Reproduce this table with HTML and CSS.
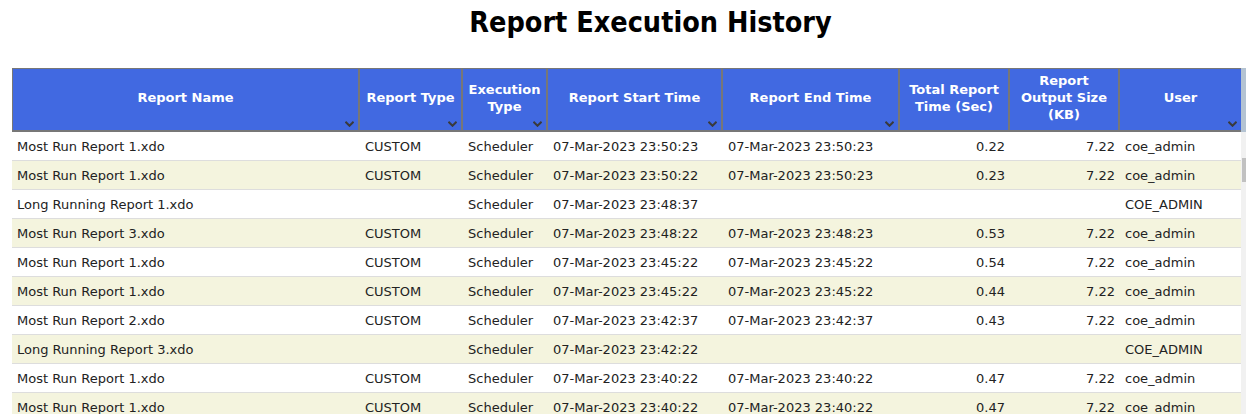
FILE: index.html
```html
<!DOCTYPE html>
<html>
<head>
<meta charset="utf-8">
<link rel="stylesheet" href="styles.css">
</head>
<body>
<div class="page">
  <h1 class="title">Report Execution History</h1>
  <div class="grid-wrap">
    <table class="grid">
      <colgroup>
        <col class="c1"><col class="c2"><col class="c3"><col class="c4"><col class="c5"><col class="c6"><col class="c7"><col class="c8">
      </colgroup>
      <thead>
        <tr>
          <th><span class="lbl">Report Name</span><svg class="arr" viewBox="0 0 10 6"><path d="M0.5 0.5 L5 5 L9.5 0.5"/></svg></th>
          <th><span class="lbl">Report Type</span><svg class="arr" viewBox="0 0 10 6"><path d="M0.5 0.5 L5 5 L9.5 0.5"/></svg></th>
          <th><span class="lbl">Execution<br>Type</span><svg class="arr" viewBox="0 0 10 6"><path d="M0.5 0.5 L5 5 L9.5 0.5"/></svg></th>
          <th><span class="lbl">Report Start Time</span><svg class="arr" viewBox="0 0 10 6"><path d="M0.5 0.5 L5 5 L9.5 0.5"/></svg></th>
          <th><span class="lbl">Report End Time</span><svg class="arr" viewBox="0 0 10 6"><path d="M0.5 0.5 L5 5 L9.5 0.5"/></svg></th>
          <th><span class="lbl">Total Report<br>Time (Sec)</span></th>
          <th><span class="lbl">Report<br>Output Size<br>(KB)</span></th>
          <th class="last"><span class="lbl">User</span><svg class="arr" viewBox="0 0 10 6"><path d="M0.5 0.5 L5 5 L9.5 0.5"/></svg></th>
        </tr>
      </thead>
      <tbody>
        <tr><td>Most Run Report 1.xdo</td><td>CUSTOM</td><td>Scheduler</td><td>07-Mar-2023 23:50:23</td><td>07-Mar-2023 23:50:23</td><td class="num">0.22</td><td class="num">7.22</td><td>coe_admin</td></tr>
        <tr><td>Most Run Report 1.xdo</td><td>CUSTOM</td><td>Scheduler</td><td>07-Mar-2023 23:50:22</td><td>07-Mar-2023 23:50:23</td><td class="num">0.23</td><td class="num">7.22</td><td>coe_admin</td></tr>
        <tr><td>Long Running Report 1.xdo</td><td></td><td>Scheduler</td><td>07-Mar-2023 23:48:37</td><td></td><td class="num"></td><td class="num"></td><td>COE_ADMIN</td></tr>
        <tr><td>Most Run Report 3.xdo</td><td>CUSTOM</td><td>Scheduler</td><td>07-Mar-2023 23:48:22</td><td>07-Mar-2023 23:48:23</td><td class="num">0.53</td><td class="num">7.22</td><td>coe_admin</td></tr>
        <tr><td>Most Run Report 1.xdo</td><td>CUSTOM</td><td>Scheduler</td><td>07-Mar-2023 23:45:22</td><td>07-Mar-2023 23:45:22</td><td class="num">0.54</td><td class="num">7.22</td><td>coe_admin</td></tr>
        <tr><td>Most Run Report 1.xdo</td><td>CUSTOM</td><td>Scheduler</td><td>07-Mar-2023 23:45:22</td><td>07-Mar-2023 23:45:22</td><td class="num">0.44</td><td class="num">7.22</td><td>coe_admin</td></tr>
        <tr><td>Most Run Report 2.xdo</td><td>CUSTOM</td><td>Scheduler</td><td>07-Mar-2023 23:42:37</td><td>07-Mar-2023 23:42:37</td><td class="num">0.43</td><td class="num">7.22</td><td>coe_admin</td></tr>
        <tr><td>Long Running Report 3.xdo</td><td></td><td>Scheduler</td><td>07-Mar-2023 23:42:22</td><td></td><td class="num"></td><td class="num"></td><td>COE_ADMIN</td></tr>
        <tr><td>Most Run Report 1.xdo</td><td>CUSTOM</td><td>Scheduler</td><td>07-Mar-2023 23:40:22</td><td>07-Mar-2023 23:40:22</td><td class="num">0.47</td><td class="num">7.22</td><td>coe_admin</td></tr>
        <tr><td>Most Run Report 1.xdo</td><td>CUSTOM</td><td>Scheduler</td><td>07-Mar-2023 23:40:22</td><td>07-Mar-2023 23:40:22</td><td class="num">0.47</td><td class="num">7.22</td><td>coe_admin</td></tr>
      </tbody>
    </table>
    <div class="scrollbar">
      <div class="sb-head"></div>
      <div class="sb-track"><div class="sb-thumb"></div></div>
    </div>
  </div>
</div>
</body>
</html>
```

FILE: styles.css
```css
html, body {
  margin: 0;
  padding: 0;
  overflow: hidden;
  background: #ffffff;
}
body {
  font-family: "DejaVu Sans", sans-serif;
  color: #222222;
}
.page {
  width: 1289px;
  padding-left: 12px;
  box-sizing: border-box;
}
.title {
  margin: 0;
  padding-top: 6px;
  height: 68px;
  box-sizing: border-box;
  text-align: center;
  font-family: "DejaVu Sans Condensed", "DejaVu Sans", sans-serif;
  font-stretch: condensed;
  font-size: 28.5px;
  font-weight: bold;
  color: #000000;
  line-height: 34px;
}
.grid-wrap {
  display: flex;
  align-items: flex-start;
}
.grid {
  table-layout: fixed;
  border-collapse: separate;
  border-spacing: 0;
  width: 1229px;
  flex: none;
}
.c1 { width: 348px; }
.c2 { width: 103px; }
.c3 { width: 85px; }
.c4 { width: 175px; }
.c5 { width: 177px; }
.c6 { width: 110px; }
.c7 { width: 110px; }
.c8 { width: 121px; }

thead th {
  position: relative;
  background: #4169e1;
  color: #ffffff;
  font-size: 13px;
  font-weight: bold;
  line-height: 17px;
  height: 64px;
  padding: 0 2px 4px 2px;
  box-sizing: border-box;
  text-align: center;
  vertical-align: middle;
  border-top: 1px solid #777777;
  border-bottom: 2px solid #777777;
  border-right: 2px solid #777777;
}
thead th:first-child {
  border-left: 1px solid #777777;
}
thead th.last {
  border-right: none;
}
.arr {
  position: absolute;
  right: 4px;
  bottom: 3px;
  width: 9px;
  height: 6px;
  fill: none;
  stroke: #3a3a3a;
  stroke-width: 2.2;
}
tbody td {
  font-size: 13px;
  height: 29px;
  padding: 0 4px 0 5px;
  box-sizing: border-box;
  border-bottom: 1px solid #dddddd;
  white-space: nowrap;
  overflow: hidden;
  vertical-align: middle;
}
tbody tr:nth-child(even) td {
  background: #f4f4de;
}
tbody td.num {
  text-align: right;
  padding-right: 5px;
}
.scrollbar {
  width: 17px;
  flex: none;
  display: flex;
  flex-direction: column;
}
.sb-head {
  height: 64px;
  background: #b4c3d2;
}
.sb-track {
  height: 300px;
  background: #f1f1f1;
  padding: 26px 0 0 1px;
  box-sizing: border-box;
}
.sb-thumb {
  width: 8px;
  height: 24px;
  background: #c1c1c1;
}
```
